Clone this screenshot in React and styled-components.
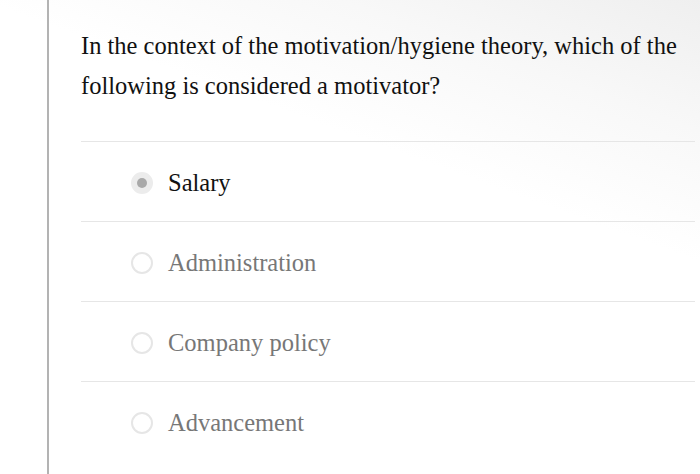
import styled, { createGlobalStyle } from "styled-components";

const Global = createGlobalStyle`
  html, body {
    margin: 0;
    padding: 0;
    background: #fff;
  }
`;

const Page = styled.div`
  width: 700px;
  height: 474px;
  overflow: hidden;
  padding-left: 47px;
  box-sizing: border-box;
  background: linear-gradient(200deg, #efefef 0%, #f8f8f8 18%, #fff 36%);
`;

const Panel = styled.main`
  height: 100%;
  border-left: 2px solid #b3b3b3;
  padding: 26px 5px 0 32px;
  box-sizing: border-box;
  font-family: "Liberation Serif", "Times New Roman", serif;
`;

const Question = styled.p`
  margin: 0 0 35px;
  font-size: 24.5px;
  line-height: 40px;
  color: #111;
`;

const OptionList = styled.ul`
  list-style: none;
  margin: 0;
  padding: 0;
`;

const Option = styled.li`
  display: flex;
  align-items: center;
  box-sizing: border-box;
  height: 80px;
  padding: 2px 0 0 50px;
  border-top: 1px solid #e6e6e6;
  gap: 15px;
  font-size: 24.5px;
  color: ${(p) => (p.$selected ? "#111" : "#777")};
`;

const Radio = styled.span`
  width: 22px;
  height: 22px;
  border-radius: 50%;
  box-sizing: border-box;
  flex: none;
  display: flex;
  align-items: center;
  justify-content: center;
  border: 2px solid ${(p) => (p.$selected ? "#ececec" : "#e6e6e6")};
  background: ${(p) => (p.$selected ? "#ececec" : "#fff")};

  &::after {
    content: "";
    width: 10px;
    height: 10px;
    border-radius: 50%;
    background: #a9a9a9;
    display: ${(p) => (p.$selected ? "block" : "none")};
  }
`;

const options = ["Salary", "Administration", "Company policy", "Advancement"];

export default function App() {
  return (
    <>
      <Global />
      <Page>
        <Panel>
          <Question>
            In the context of the motivation/hygiene theory, which of the following is considered a motivator?
          </Question>
          <OptionList>
            {options.map((o, i) => (
              <Option key={o} $selected={i === 0}>
                <Radio $selected={i === 0} />
                {o}
              </Option>
            ))}
          </OptionList>
        </Panel>
      </Page>
    </>
  );
}
